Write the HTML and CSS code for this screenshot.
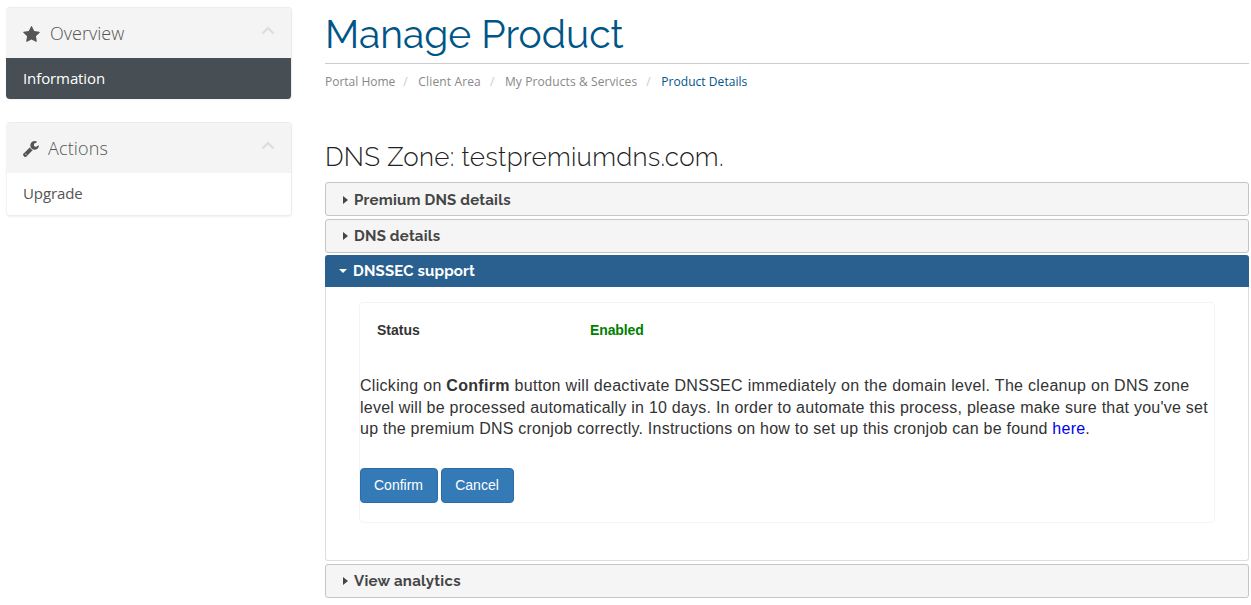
FILE: index.html
```html
<!DOCTYPE html>
<html lang="en">
<head>
<meta charset="utf-8">
<title>Manage Product</title>
<link rel="stylesheet" href="styles.css">
</head>
<body>
<aside class="sidebar">
  <section class="card">
    <header class="card-head">
      <svg class="icon-star" viewBox="0 0 1664 1600"><path d="M1664 615q0 22-26 48l-363 354 86 500q1 7 1 20 0 21-10.500 35.500t-30.500 14.500q-19 0-40-12l-449-236-449 236q-22 12-40 12-21 0-31.500-14.500t-10.500-35.500q0-6 2-20l86-500-364-354q-25-27-25-48 0-37 56-46l502-73 225-455q19-41 49-41t49 41l225 455 502 73q56 9 56 46z"/></svg>
      <span class="card-title title-overview">Overview</span>
      <svg class="chevron" viewBox="0 0 14 9"><path d="M1.500 7.500 7 2l5.500 5.500"/></svg>
    </header>
    <a class="card-item active">Information</a>
  </section>
  <section class="card">
    <header class="card-head">
      <svg class="icon-wrench" viewBox="0 0 1641 1643"><path d="M363 1344q0-26-19-45t-45-19-45 19-19 45 19 45 45 19 45-19 19-45zm644-420-682 682q-37 37-90 37-52 0-91-37L38 1498q-38-36-38-90 0-53 38-91l681-681q39 98 114.500 173.500t173.500 114.500zm634-435q0 39-23 106-47 134-164.500 217.500t-258.500 83.500q-185 0-316.500-131.500t-131.500-316.500 131.500-316.500 316.500-131.500q58 0 121.500 16.500t107.500 46.500q16 11 16 28t-16 28l-293 169v224l193 107q5-3 79-48.500t135.500-81 70.500-35.500q15 0 23.500 10t8.500 25z"/></svg>
      <span class="card-title title-actions">Actions</span>
      <svg class="chevron" viewBox="0 0 14 9"><path d="M1.500 7.500 7 2l5.500 5.500"/></svg>
    </header>
    <a class="card-item">Upgrade</a>
  </section>
</aside>
<main class="content">
  <h1 class="page-title">Manage Product</h1>
  <nav class="crumbs">
    <a>Portal Home</a><i>/</i><a class="crumb-area">Client Area</a><i>/</i><a class="crumb-products">My Products &amp; Services</a><i>/</i><a class="current">Product Details</a>
  </nav>
  <h2 class="zone">DNS Zone: testpremiumdns.com.</h2>
  <div class="accordion">
    <h3 class="bar label-premium"><span class="caret"></span><span>Premium DNS details</span></h3>
    <h3 class="bar"><span class="caret"></span><span>DNS details</span></h3>
    <h3 class="bar open"><span class="caret-down"></span><span>DNSSEC support</span></h3>
    <div class="panel">
      <div class="box">
        <div class="status"><b class="status-name">Status</b><b class="enabled">Enabled</b></div>
        <p class="note"><span class="note-first">Clicking on <b>Confirm</b> button will deactivate DNSSEC immediately on the domain level. The cleanup on DNS zone</span><br>level will be processed automatically in 10 days. In order to automate this process, please make sure that you've set<br>up the premium DNS cronjob correctly. Instructions on how to set up this cronjob can be found <a class="link">here</a>.</p>
        <div class="buttons"><button class="btn confirm">Confirm</button><button class="btn cancel">Cancel</button></div>
      </div>
    </div>
    <h3 class="bar label-view"><span class="caret"></span><span>View analytics</span></h3>
  </div>
</main>
</body>
</html>
```

FILE: styles.css
```css
* { box-sizing: border-box; }
body {
  margin: 0;
  height: 605px;
  overflow: hidden;
  display: flex;
  gap: 33px;
  padding: 7px 2px 0 6px;
  background: #fff;
  color: #333;
  font-family: "Open Sans", sans-serif;
}
.sidebar { width: 286px; flex: none; display: flex; flex-direction: column; gap: 22px; }
.card {
  border: 1px solid #ececec;
  border-left-color: #f4f4f4;
  border-radius: 4px;
  overflow: hidden;
  box-shadow: 0 1px 2px rgba(0,0,0,.06);
}
.card:first-child { border-bottom: 0; border-left: 0; height: 92px; margin-bottom: 1px; }
.card-head {
  height: 50px;
  display: flex;
  align-items: center;
  padding: 2px 16px 0 16px;
  background: #f4f4f4;
  fill: #555;
}
.card:first-child .card-head { padding-left: 17px; }
.icon-star { width: 17px; height: 16px; margin-right: 10px; }
.icon-wrench { width: 16px; height: 16px; margin-right: 9px; }
.card-title { margin-top: -2px; font-size: 18px; font-weight: 300; line-height: 24px; color: #555; }
.title-actions { letter-spacing: .15px; }
.chevron { width: 14px; height: 9px; margin-left: auto; margin-top: -7px; fill: none; stroke: #ddd; stroke-width: 2.200; }
.card-item { display: flex; align-items: center; height: 42px; padding: 0 16px 2px; font-size: 15px; letter-spacing: -.1px; color: #555; }
.card-item.active { height: 41px; padding-left: 17px; background: #474f54; color: #fff; }

.content { flex: 1; min-width: 0; }
.page-title, .zone, .bar { font-family: Raleway, Lato, sans-serif; }
.page-title { margin: 0; height: 57px; border-bottom: 1px solid #ccc; font-size: 39px; line-height: 54px; font-weight: 400; color: #058; white-space: nowrap; }
.crumbs { display: flex; height: 35px; align-items: center; font-size: 12px; color: #888; white-space: nowrap; }
.crumbs i { width: 23px; padding-left: 8px; font-style: normal; color: #ccc; }
.crumbs .current { color: #058; letter-spacing: .05px; }
.crumb-area { letter-spacing: .14px; }
.crumb-products { letter-spacing: .1px; }
.crumb-area + i, .crumb-products + i { width: 24px; padding-left: 9px; }
.zone { margin: 38px 0 0; height: 45px; font-size: 26px; line-height: 40px; font-weight: 300; letter-spacing: .28px; color: #222; white-space: nowrap; }
.accordion { display: flex; flex-direction: column; }
.bar {
  margin: 0 0 3px;
  height: 34px;
  display: flex;
  align-items: center;
  padding-left: 17px;
  border: 1px solid #c5c5c5;
  border-radius: 3px;
  background: #f5f5f5;
  color: #454545;
  font-size: 15px;
  font-weight: 700;
  letter-spacing: .22px;
  white-space: nowrap;
}
.label-premium { padding-top: 1px; }
.label-view { letter-spacing: .29px; }
.bar.open { height: 32px; margin: -1px 0 0; padding-left: 14px; border: 0; border-radius: 3px 3px 0 0; background: #29608f; color: #fff; letter-spacing: .17px; }
.caret { margin-right: 6px; border: solid transparent; border-width: 4px 0 4px 5px; border-left-color: #454545; }
.caret-down { margin: -1px 6px 0 0; border: solid transparent; border-width: 4px 4.500px 0; border-top-color: #fff; }
.panel { height: 274px; margin-bottom: 3px; padding: 15px 33px; border: 1px solid #ddd; border-top: 0; border-radius: 0 0 3px 3px; }
.box { height: 221px; border: 1px solid #f4f4f4; border-radius: 4px; font-family: "Liberation Sans", Arial, sans-serif; }
.status { display: flex; padding: 19px 17px 0; font-size: 14px; line-height: 16px; }
.status-name { width: 213px; }
.enabled { color: #008000; letter-spacing: -.12px; }
.note { margin: 37px 0 0; font-size: 16px; line-height: 21.600px; letter-spacing: .235px; white-space: nowrap; }
.note-first { letter-spacing: .302px; }
.link { color: #00e; }
.buttons { display: flex; gap: 3px; margin-top: 28px; }
.btn { height: 35px; padding: 0 1px 0 0; border: 1px solid #2e6da4; border-radius: 4px; background: #337ab7; color: #fff; font: 14px "Liberation Sans", Arial, sans-serif; }
.confirm { width: 78px; }
.cancel { width: 73px; }
```
